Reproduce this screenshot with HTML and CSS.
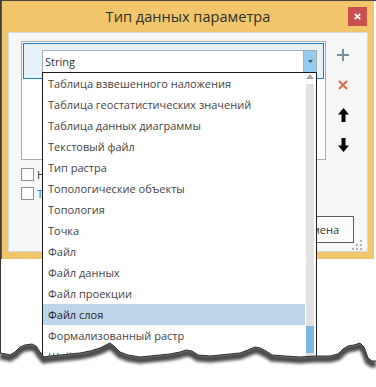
FILE: index.html
```html
<!DOCTYPE html>
<html lang="ru">
<head>
<meta charset="utf-8">
<title>Тип данных параметра</title>
<link rel="stylesheet" href="styles.css">
</head>
<body>
<div class="page">
  <div class="window">
    <div class="titlebar">
      <span class="title">Тип данных параметра</span>
      <button class="close" aria-label="Закрыть"><svg width="7" height="7" viewBox="0 0 7 7"><path d="M0.8 0.8L6.2 6.2M6.2 0.8L0.8 6.2" stroke="#fff" stroke-width="1.7"/></svg></button>
    </div>
    <div class="content">
      <div class="top">
        <div class="grid">
          <div class="row-selected">
            <div class="combo">
              <span class="combo-text">String</span>
              <span class="combo-btn"><svg width="5" height="3" viewBox="0 0 5 3"><path d="M0 0H5L2.5 3Z" fill="#4a4a4a"/></svg></span>
              <div class="dropdown">
                <ul class="items">
                  <li>Таблица взвешенного наложения</li>
                  <li>Таблица геостатистических значений</li>
                  <li>Таблица данных диаграммы</li>
                  <li>Текстовый файл</li>
                  <li>Тип растра</li>
                  <li>Топологические объекты</li>
                  <li>Топология</li>
                  <li>Точка</li>
                  <li>Файл</li>
                  <li>Файл данных</li>
                  <li>Файл проекции</li>
                  <li class="active">Файл слоя</li>
                  <li>Формализованный растр</li>
                  <li>Шейп-файл</li>
                  <li>Экстент</li>
                </ul>
                <div class="scrollbar">
                  <span class="sb-up"></span>
                  <div class="sb-track"><div class="sb-thumb"></div></div>
                </div>
              </div>
            </div>
          </div>
        </div>
        <div class="toolbar">
          <button class="tool" aria-label="Добавить"><svg width="12" height="12" viewBox="0 0 12 12"><path d="M6 0V12M0 6H12" stroke="#7890a2" stroke-width="2"/></svg></button>
          <button class="tool" aria-label="Удалить"><svg width="10" height="10" viewBox="0 0 10 10"><path d="M1 1L9 9M9 1L1 9" stroke="#de6b4b" stroke-width="2.2"/></svg></button>
          <button class="tool" aria-label="Вверх"><svg width="11" height="14" viewBox="0 0 11 14"><path d="M5.5 0L11 6.5H7.5V14H3.5V6.5H0Z" fill="#000"/></svg></button>
          <button class="tool" aria-label="Вниз"><svg width="11" height="14" viewBox="0 0 11 14"><path d="M5.5 14L11 7.5H7.5V0H3.5V7.5H0Z" fill="#000"/></svg></button>
        </div>
      </div>
      <div class="checks">
        <label class="check"><span class="box"></span><span class="check-label">Несколько значений</span></label>
        <label class="check hover"><span class="box"></span><span class="check-label">Таблица значений</span></label>
      </div>
      <div class="actions">
        <button class="btn btn-hidden">ОК</button>
        <button class="btn focused"><span class="btn-label">Отмена</span></button>
      </div>
      <svg class="grip" width="10" height="10" viewBox="0 0 10 10"><g fill="#b3b3b3"><rect x="8" y="0" width="2" height="2"/><rect x="4" y="4" width="2" height="2"/><rect x="8" y="4" width="2" height="2"/><rect x="0" y="8" width="2" height="2"/><rect x="4" y="8" width="2" height="2"/><rect x="8" y="8" width="2" height="2"/></g></svg>
    </div>
  </div>
  <svg class="torn" width="376" height="57" viewBox="0 0 376 57">
    <defs>
      <filter id="blur" x="-5%" y="-50%" width="110%" height="200%"><feGaussianBlur stdDeviation="1.6"/></filter>
      <clipPath id="below"><polygon points="0,23 6,24 10,25 15,22 20,17 25,15 32,14 36,16 40,22 44,27 50,26 60,25 70,24 80,23 90,21 100,18 106,15 110,13 114,16 120,22 128,25 140,27 150,26 160,25 170,24 180,22 186,20 192,21 198,25 210,26 220,25 230,24 240,23 248,20 255,17 260,18 266,21 272,25 285,26 300,27 315,26 330,26 338,24 343,19 348,16 354,15 360,13 364,17 368,28 372,31 376,31 376,57 0,57"/></clipPath>
    </defs>
    <polygon fill="#fff" points="0,23 6,24 10,25 15,22 20,17 25,15 32,14 36,16 40,22 44,27 50,26 60,25 70,24 80,23 90,21 100,18 106,15 110,13 114,16 120,22 128,25 140,27 150,26 160,25 170,24 180,22 186,20 192,21 198,25 210,26 220,25 230,24 240,23 248,20 255,17 260,18 266,21 272,25 285,26 300,27 315,26 330,26 338,24 343,19 348,16 354,15 360,13 364,17 368,28 372,31 376,31 376,57 0,57"/>
    <g clip-path="url(#below)">
      <polyline fill="none" stroke="#4b4b4b" stroke-width="7" filter="url(#blur)" transform="translate(0,3)" points="0,23 6,24 10,25 15,22 20,17 25,15 32,14 36,16 40,22 44,27 50,26 60,25 70,24 80,23 90,21 100,18 106,15 110,13 114,16 120,22 128,25 140,27 150,26 160,25 170,24 180,22 186,20 192,21 198,25 210,26 220,25 230,24 240,23 248,20 255,17 260,18 266,21 272,25 285,26 300,27 315,26 330,26 338,24 343,19 348,16 354,15 360,13 364,17 368,28 372,31 376,31"/>
    </g>
    <polyline fill="none" stroke="#2b2b2b" stroke-width="1" points="0,23 6,24 10,25 15,22 20,17 25,15 32,14 36,16 40,22 44,27 50,26 60,25 70,24 80,23 90,21 100,18 106,15 110,13 114,16 120,22 128,25 140,27 150,26 160,25 170,24 180,22 186,20 192,21 198,25 210,26 220,25 230,24 240,23 248,20 255,17 260,18 266,21 272,25 285,26 300,27 315,26 330,26 338,24 343,19 348,16 354,15 360,13 364,17 368,28 372,31 376,31"/>
  </svg>
</div>
</body>
</html>
```
FILE: styles.css
```css
* { box-sizing: border-box; }
html, body { margin: 0; padding: 0; }
body {
  width: 376px;
  height: 387px;
  overflow: hidden;
  background: #fff;
  font-family: "Open Sans", "Noto Sans", sans-serif;
  font-size: 11px;
  color: #333;
}
.page {
  position: relative;
  width: 376px;
  height: 387px;
  border-left: 1px solid #3a3a3a;
  border-top: 1px solid #474747;
}
.window {
  width: 373px;
  background: #f1c66b;
  border-left: 1px solid #5a5a5a;
  padding: 0 6px 7px 6px;
}
.titlebar {
  height: 31px;
  display: grid;
  grid-template-columns: 1fr auto 1fr;
  align-items: start;
}
.title {
  grid-column: 2;
  line-height: 31px;
  font-size: 14.6px;
  color: #2e2e2e;
  white-space: nowrap;
}
.close {
  grid-column: 3;
  justify-self: end;
  margin: 6px 1px 0 0;
  width: 19px;
  height: 19px;
  border: none;
  padding: 0;
  background: #c75050;
  display: flex;
  align-items: center;
  justify-content: center;
}
.content {
  position: relative;
  height: 220px;
  background: #f6f8f8;
  border: 1px solid #d8d8d8;
  display: flex;
  flex-direction: column;
  padding: 8px 13px 8px 12px;
}
.top {
  display: flex;
  gap: 6px;
}
.grid {
  width: 305px;
  height: 119px;
  border: 1px solid #ababab;
  background: #fff;
  padding: 1px;
}
.row-selected {
  height: 36px;
  border: 1px solid #1b7acb;
  background: #e5f1fb;
  padding: 6px 6px 0 18px;
}
.combo {
  position: relative;
  width: 275px;
  height: 23px;
  display: flex;
  border: 1px solid #acacac;
  background: #fff;
}
.combo-text {
  flex: 1;
  padding-left: 2px;
  line-height: 21px;
  color: #333;
}
.combo-btn {
  width: 13px;
  background: #95cbf1;
  border-left: 1px solid #82bce8;
  display: flex;
  align-items: center;
  justify-content: center;
}
.dropdown {
  position: absolute;
  left: -1px;
  top: 21px;
  width: 275px;
  height: 310px;
  border: 1px solid #1a1a1a;
  background: #fff;
  display: flex;
  z-index: 5;
}
.items {
  flex: 1;
  margin: 0;
  padding: 0;
  list-style: none;
}
.items li {
  height: 21px;
  line-height: 21px;
  padding-left: 5px;
  color: #444;
  white-space: nowrap;
}
.items li.active {
  background: #bcd5eb;
  color: #1e1e1e;
}
.scrollbar {
  width: 11px;
  padding: 1px 2px 0 1px;
  display: flex;
  flex-direction: column;
  align-items: center;
}
.sb-up {
  width: 0;
  height: 0;
  border-left: 4px solid transparent;
  border-right: 4px solid transparent;
  border-bottom: 5px solid #a6a6a6;
}
.sb-track {
  width: 8px;
  flex: 1;
  margin-top: 5px;
  background: #e2e2e2;
}
.sb-thumb {
  margin-top: 242px;
  height: 27px;
  background: #7bb9e3;
}
.toolbar {
  width: 24px;
  margin-top: -1px;
  display: flex;
  flex-direction: column;
}
.tool {
  height: 30px;
  border: none;
  background: none;
  padding: 0;
  display: flex;
  align-items: center;
  justify-content: center;
}
.checks {
  margin-top: 8px;
  display: flex;
  flex-direction: column;
  gap: 6px;
}
.check {
  display: flex;
  align-items: center;
  gap: 3px;
  height: 13px;
  color: #333;
}
.check-label {
  width: 5px;
  overflow: hidden;
  white-space: nowrap;
  line-height: 15px;
}
.check.hover { color: #2a6db5; }
.box {
  width: 13px;
  height: 13px;
  border: 1px solid #8e8e8e;
  background: #fff;
}
.actions {
  margin-top: auto;
  display: flex;
  justify-content: flex-end;
  gap: 9px;
}
.btn {
  width: 71px;
  height: 27px;
  border: 1px solid #adadad;
  background: #fdfdfd;
  font-family: inherit;
  font-size: 11px;
  color: #333;
  padding: 0;
  display: flex;
  align-items: center;
  justify-content: center;
}
.btn-hidden { visibility: hidden; }
.btn.focused { border-color: #5c5c5c; }
.btn-label {
  display: block;
  white-space: nowrap;
}
.grip {
  position: absolute;
  right: 5px;
  bottom: 1px;
}
.torn {
  position: absolute;
  left: -1px;
  top: 329px;
  z-index: 10;
}
```
